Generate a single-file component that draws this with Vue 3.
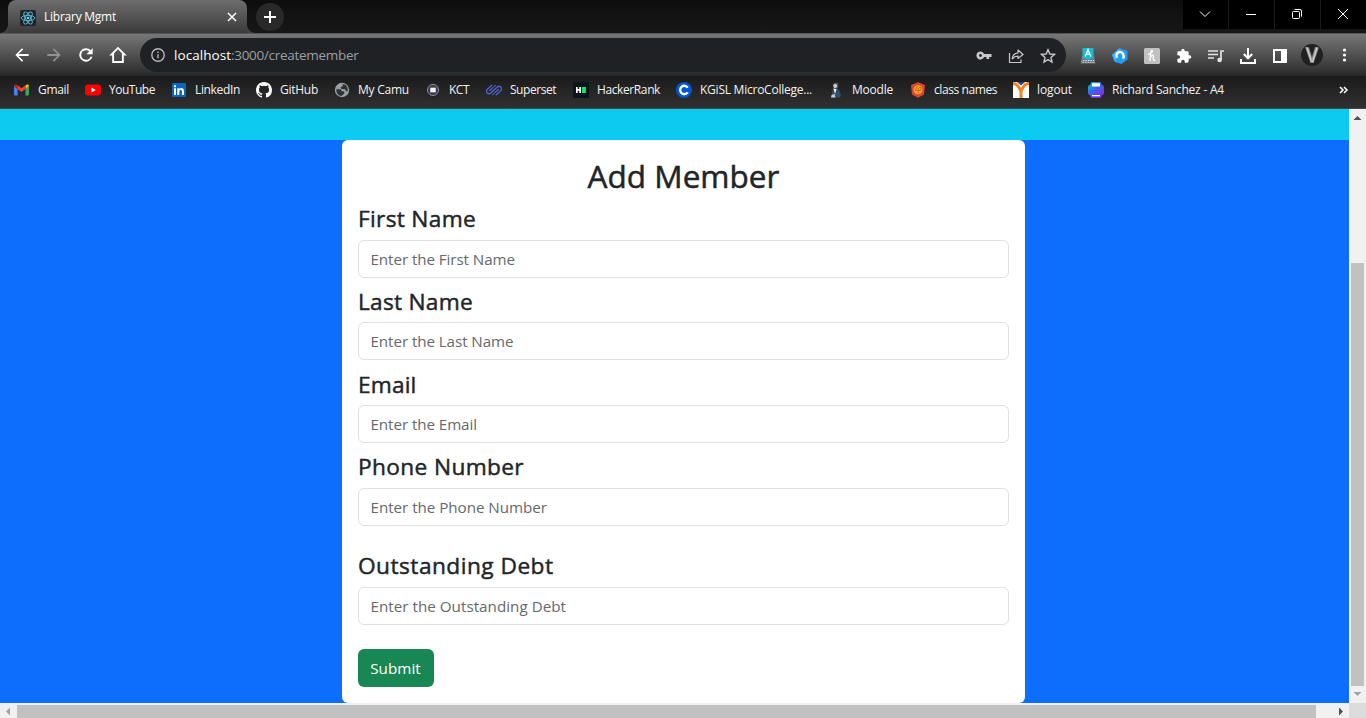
<script setup>
const svg = (box, body) => `<svg viewBox="0 0 ${box} ${box}" width="100%" height="100%" xmlns="http://www.w3.org/2000/svg">${body}</svg>`

const bookmarks = [
  { label: 'Gmail', width: 31, icon: svg(16, '<path d="M1 13.5h2.6V7L0 4.3v8.2a1 1 0 0 0 1 1z" fill="#4285f4"/><path d="M11.4 13.5H14a1 1 0 0 0 1-1V4.3L11.4 7z" fill="#34a853"/><path d="M11.4 3.6V7L15 4.3c0-2-1.500-2.300-2.500-1.500z" fill="#fbbc04"/><path d="M3.600 7V3.200l3.900 3 3.900-3V7L7.500 10z" fill="#ea4335"/><path d="M0 4.300 3.600 7V3.300C1.800 1.800 0 2.600 0 4.300z" fill="#c5221f"/>') },
  { label: 'YouTube', width: 46, icon: svg(16, '<rect x="0" y="2.500" width="16" height="11" rx="3" fill="#f00"/><path d="m6.500 5.500 4.200 2.500-4.200 2.500z" fill="#fff"/>') },
  { label: 'LinkedIn', width: 45, icon: svg(16, '<rect x="1" y="1" width="14" height="14" rx="1" fill="#0a66c2"/><path d="M3 6.200h2V13H3zM3 3.200h2v2H3zM6.300 6.200h1.900v.9C9.800 5.200 13 5.900 13 9v4h-2V9.400c0-2-2.700-2-2.700 0V13h-2z" fill="#fff"/>') },
  { label: 'GitHub', width: 38, icon: svg(16, '<path d="M8 0C3.580 0 0 3.580 0 8c0 3.540 2.290 6.530 5.470 7.590.4.070.55-.17.55-.38v-1.490c-2.010.37-2.530-.49-2.690-.94-.09-.23-.48-.94-.82-1.130-.28-.15-.68-.52-.01-.53.63-.01 1.080.58 1.230.82.72 1.210 1.870.87 2.330.66.07-.52.28-.87.51-1.070-1.780-.2-3.640-.89-3.640-3.950 0-.87.31-1.590.82-2.150-.08-.2-.36-1.020.08-2.120 0 0 .67-.21 2.200.82a7.600 7.600 0 0 1 4 0c1.530-1.040 2.200-.82 2.200-.82.44 1.100.16 1.920.08 2.120.51.56.82 1.270.82 2.150 0 3.070-1.870 3.750-3.650 3.950.29.25.54.73.54 1.480v2.190c0 .21.15.46.55.38A8 8 0 0 0 16 8c0-4.420-3.580-8-8-8z" fill="#fff"/>') },
  { label: 'My Camu', width: 51, icon: svg(16, '<circle cx="8" cy="8" r="7.200" fill="#9aa0a6"/><path d="M2.300 7.200 6.500 7.300l1.300 2 2.500.2v2l-2.500 2.300c-3.200.2-5.600-2.400-5.500-6.600zM8.500 2 9 3.800 6.700 5.300 7.200 7l3.800.3 1.300 1.900h1.400C14.200 5 12 2.200 8.500 2z" fill="#303134"/>') },
  { label: 'KCT', width: 20, icon: svg(16, '<circle cx="8" cy="8" r="7.500" fill="#24242f"/><circle cx="8" cy="8" r="5.500" fill="#383846" stroke="#8e8da6" stroke-width="1"/><rect x="5.300" y="5.700" width="5.400" height="4.600" fill="#fff"/><path d="M6.200 7h3.600M6.200 8.800h3.600" stroke="#c7c7c7" stroke-width=".5"/>') },
  { label: 'Superset', width: 46, icon: svg(16, '<g transform="rotate(-42 8 8)" fill="none" stroke="#4f63d2" stroke-width="1.300" stroke-linecap="round"><path d="M9.500 3H3.500a2.500 2.500 0 0 0 0 5H11M9.500 5.500h-5M6.500 13h6a2.500 2.500 0 0 0 0-5H11M6.500 10.500h5M5 8h6"/><path d="M11 5.500h1M4 10.500h1"/></g>') },
  { label: 'HackerRank', width: 63, icon: svg(16, '<path d="M0 0h16v16H0z" fill="#0e141e"/><path d="M3 5h1.700v2h1.600V5H8v6H6.300V8.800H4.700V11H3z" fill="#fff"/><path d="M9 5h4v6H9z" fill="#00ea64"/>') },
  { label: 'KGiSL MicroCollege...', width: 112, icon: svg(16, '<circle cx="8" cy="8" r="8" fill="#0056d2"/><path d="M11.800 10.400a4.200 4.200 0 1 1 0-4.800" fill="none" stroke="#fff" stroke-width="2.400"/>') },
  { label: 'Moodle', width: 41, icon: svg(16, '<path d="M4.500 2.500 7 .5 10 1l.5 3-1 2.500-3.500-.5z" fill="#4d545c"/><circle cx="7.200" cy="4" r="1.900" fill="#dbd0c2"/><path d="m4.500 7 3-1L11 8l2 5-1 2.500H4z" fill="#2e4f68"/><path d="m5.500 6.500 3 .5-1.500 5z" fill="#f1f4f6"/><path d="m3.500 13 3-1 1 3.500H3z" fill="#c5ced5"/>') },
  { label: 'class names', width: 63, icon: svg(16, '<path d="M8 .3 15 3l-1 9.500-6 3.300-6-3.300L1 3z" fill="#dc4437"/><circle cx="8" cy="7.700" r="4.500" fill="#f4a61e"/><path d="m7.500 4-2.500 4.300h3M8.500 6v5.500M9 5.500h2v3H9" stroke="#c65e19" stroke-width=".9" fill="none"/>') },
  { label: 'logout', width: 35, icon: svg(16, '<path d="M0 0h16v16H0z" fill="#fff"/><path d="M4 0h8L8 3.500z" fill="#24469b"/><path d="M0 1.600c3 0 4.500 1.200 6 3.900L8 9v7M16 1.600c-3 0-4.500 1.200-6 3.900L8 9" fill="none" stroke="#f58220" stroke-width="3"/>') },
  { label: 'Richard Sanchez - A4', width: 112, icon: svg(16, '<defs><linearGradient id="printer" x1="0" y1="0" x2=".8" y2="1"><stop stop-color="#00d0cc"/><stop offset=".5" stop-color="#3b62e8"/><stop offset="1" stop-color="#8b25ed"/></linearGradient></defs><path d="M4 0h8q1.500 0 1.500 2.500Q16 3 16 5v6q0 2-2.500 2.500Q13.500 16 12 16H4q-1.500 0-1.500-2.500Q0 13 0 11V5q0-2 2.500-2.500Q2.500 0 4 0z" fill="url(#printer)"/><path d="M4 1.200h8V4.500H4zM4 13h8V14.300H4z" fill="#fff"/>') },
]

const navigation = [
  { name: 'Back', color: '#fff', path: 'M20 10.800H7.830l5.590-5.390L12 4l-8 8 8 8 1.410-1.410L7.830 13.200H20v-2.400z' },
  { name: 'Forward', color: '#929292', path: 'm12 4-1.410 1.410L16.170 10.800H4v2.400h12.170l-5.580 5.390L12 20l8-8z' },
  { name: 'Reload', color: '#fff', path: 'M17.650 6.350A8 8 0 1 0 19.730 14h-2.380A5.700 5.700 0 1 1 12 6.300c1.660 0 2.940.59 3.920 1.580L12.500 11H20V3.500z' },
  { name: 'Home', color: '#fff', path: 'M12 2 1.500 12.500h3.500V21.500h14v-9h3.500zM12 5.200l4.700 4.700v9.300H7.300V9.900z' },
]

const pillIcons = [
  svg(16, '<path d="M8.100 6.500a4 4 0 1 0 0 3H10.500V11.500h2.700V9.500H15.500v-3zM4.500 9.400a1.400 1.400 0 1 1 0-2.800 1.400 1.400 0 0 1 0 2.800z" fill="#c7c8ca" transform="translate(0 -.5)"/>'),
  svg(16, '<path d="M1.500 5v9.500H13v-3M10 2l5 4.500-5 4v-2.400c-2.600 0-4.200.8-5.800 2.700.4-3.300 2.500-5.400 5.800-5.900z" fill="none" stroke="#c7c8ca" stroke-width="1.200" stroke-linejoin="round"/>'),
  svg(16, '<path d="m8 1.700 1.850 4.300 4.650.4-3.530 3.080 1.060 4.560L8 11.630l-4.030 2.410 1.060-4.560L1.500 6.400l4.650-.4z" fill="none" stroke="#c7c8ca" stroke-width="1.400"/>'),
]

const extensions = [
  svg(16, '<path d="M2 8h12l1.500 7.500h-15z" fill="#747d80"/><path d="M3 12.500h11M2.500 14.300h12" stroke="#d4d4d4" stroke-dasharray="1.500 1"/><path d="M2.500 0h11v9.500L8 12 2.500 9.500z" fill="#16bdd2"/><path d="m5.200 8.500 2.800-7 2.800 7M6.300 6.300h3.400" fill="none" stroke="#e9ffff" stroke-width="1.400"/>'),
  svg(16, '<path d="m7.500 0 8 3V11.500L9.500 16 3 14 0 7z" fill="#229cf4"/><path d="m0 7 7.500-7-2 8L3 14z" fill="#45b3fb"/><path d="M5 9.800C3.200 6 6 4 8 4c3 0 4.700 3.500 3 6.800" fill="none" stroke="#fff" stroke-width="2.400"/>'),
  svg(16, '<rect width="16" height="16" rx="1.500" fill="#c1c1c1"/><path d="M4 6.500c2.500-.5 5.300-3.200 4.200-4C6.800 2 6.300 7 6 13M6.200 10c1.200-3.500 3.500-3.500 3.300-1.500-.6 2.500-.3 4.700 1.700 3.600" fill="none" stroke="#fff" stroke-width="1.300"/>'),
  svg(24, '<path d="M20.500 11H19V7a2 2 0 0 0-2-2h-4V3.500a2.500 2.500 0 0 0-5 0V5H4a2 2 0 0 0-2 2v3.800h1.500a2.700 2.700 0 0 1 0 5.400H2V20a2 2 0 0 0 2 2h3.800v-1.500a2.700 2.700 0 0 1 5.400 0V22H17a2 2 0 0 0 2-2v-4h1.500a2.500 2.500 0 0 0 0-5z" fill="#fff"/>'),
  svg(16, '<path d="M0 3h10M0 6.500h10M0 10h6" stroke="#e3e3e3" stroke-width="1.600"/><path d="M13 12V3H16" fill="none" stroke="#e3e3e3" stroke-width="1.700"/><circle cx="11.600" cy="12" r="2.300" fill="#e3e3e3"/>'),
  svg(16, '<path d="M8 0v10M3.800 6 8 10.300 12.200 6M1 11v4h14v-4" fill="none" stroke="#fff" stroke-width="2"/>'),
  svg(16, '<path d="M1 1h14v14H1zM3 3v10h6V3z" fill="#fff" fill-rule="evenodd"/>'),
]

const react = svg(16, '<rect width="16" height="16" rx="2" fill="#20232a"/><g fill="none" stroke="#55bdd8" stroke-width=".9"><ellipse cx="8" cy="8" rx="6.800" ry="2.600"/><ellipse cx="8" cy="8" rx="6.800" ry="2.600" transform="rotate(60 8 8)"/><ellipse cx="8" cy="8" rx="6.800" ry="2.600" transform="rotate(120 8 8)"/></g><circle cx="8" cy="8" r="1.300" fill="#61dafb"/>')

const fields = [
  { label: 'First Name', labelWidth: 118, placeholder: 'Enter the First Name', width: 144.5 },
  { label: 'Last Name', labelWidth: 115, placeholder: 'Enter the Last Name', width: 143 },
  { label: 'Email', labelWidth: 58.5, placeholder: 'Enter the Email', width: 106.5 },
  { label: 'Phone Number', labelWidth: 166, placeholder: 'Enter the Phone Number', width: 176.5 },
  { label: 'Outstanding Debt', labelWidth: 195.5, placeholder: 'Enter the Outstanding Debt', width: 195.5, spaced: true },
]

// Spreads the letters of a text evenly so that it takes the given width.
const measure = document.createElement('canvas').getContext('2d')
const vFit = {
  mounted(el, { value }) {
    const style = getComputedStyle(el)
    const text = el.placeholder || el.textContent.trim()
    measure.font = `${style.fontWeight} ${style.fontSize} ${style.fontFamily}`
    el.style.letterSpacing = `${(value - measure.measureText(text).width) / text.length}px`
  },
}
</script>

<template>
  <div class="browser">
    <header class="tabs">
      <div class="tab">
        <i class="icon" v-html="react"></i>
        <span class="tab-title" v-fit="72">Library Mgmt</span>
        <svg class="tab-close" viewBox="0 0 10 10"><path d="m1 1 8 8M9 1 1 9" /></svg>
      </div>
      <div class="new-tab"><svg viewBox="0 0 12 12"><path d="M6 0v12M0 6h12" /></svg></div>
      <div class="window-buttons">
        <span><svg viewBox="0 0 12 12"><path d="m1 3.500 5 5 5-5" /></svg></span>
        <span><svg viewBox="0 0 12 12"><path d="M1 6.500h10" /></svg></span>
        <span><svg viewBox="0 0 12 12"><rect x="1.500" y="3.500" width="7" height="7" rx="1" /><path d="M3.500 1.500H9q1.500 0 1.500 1.500v5.500" /></svg></span>
        <span><svg viewBox="0 0 12 12"><path d="m1 1 10 10M11 1 1 11" /></svg></span>
      </div>
    </header>

    <div class="toolbar">
      <div v-for="n in navigation" :key="n.name" class="cell">
        <svg width="20" height="20" viewBox="0 0 24 24" :fill="n.color"><path :d="n.path" /></svg>
      </div>
      <div class="address">
        <svg class="info" viewBox="0 0 14 14"><circle cx="7" cy="7" r="6.200" /><path d="M7 6.200v4M7 3.500v1.500" /></svg>
        <span class="url"><span class="host" v-fit="57">localhost</span><span v-fit="127.500">:3000/createmember</span></span>
        <div v-for="(p, i) in pillIcons" :key="i" class="cell"><i class="icon" v-html="p"></i></div>
      </div>
      <div v-for="(e, i) in extensions" :key="i" class="cell"><i class="icon" v-html="e"></i></div>
      <div class="cell">
        <svg width="22" height="22" viewBox="0 0 22 22"><circle cx="11" cy="11" r="11" fill="#202020" /><path d="m4 3 4 .5L11 13l3-10 4 .5L12.500 19h-3z" fill="#8d8d8d" /><path d="m6 3.500 4.500 14M16 3.500 11.500 18" stroke="#d0d0d0" stroke-width="1.300" /></svg>
      </div>
      <div class="cell">
        <svg width="16" height="16" viewBox="0 0 16 16" fill="#fff"><circle cx="8.500" cy="3" r="1.600" /><circle cx="8.500" cy="8" r="1.600" /><circle cx="8.500" cy="13" r="1.600" /></svg>
      </div>
    </div>

    <nav class="bookmarks">
      <div v-for="b in bookmarks" :key="b.label" class="bookmark">
        <i class="icon" v-html="b.icon"></i><span v-fit="b.width">{{ b.label }}</span>
      </div>
      <svg class="more" viewBox="0 0 9 8"><path d="m1 1 3 3-3 3M5 1l3 3-3 3" /></svg>
    </nav>

    <div class="viewport">
      <main class="page">
        <div class="strip"></div>
        <form class="card" @submit.prevent>
          <h2><span v-fit="192">Add Member</span></h2>
          <div v-for="f in fields" :key="f.label" class="field" :class="{ spaced: f.spaced }">
            <h4><span v-fit="f.labelWidth">{{ f.label }}</span></h4>
            <input v-fit="f.width" :placeholder="f.placeholder" :aria-label="f.label" />
          </div>
          <button type="submit"><span v-fit="50.500">Submit</span></button>
        </form>
      </main>
      <div class="scroll-y">
        <svg viewBox="0 0 17 17"><path d="M4.500 11h8L8.500 7z" fill="#505050" /></svg>
        <div class="thumb"></div>
        <svg viewBox="0 0 17 17"><path d="M4.500 6h8L8.500 10z" fill="#a3a3a3" /></svg>
      </div>
      <div class="scroll-x">
        <svg viewBox="0 0 17 15"><path d="M10 4.500v8l-4-4z" fill="#a3a3a3" /></svg>
        <div class="thumb"></div>
        <svg viewBox="0 0 17 15"><path d="M7 4.500v8l4-4z" fill="#505050" /></svg>
      </div>
      <div class="corner"></div>
    </div>
  </div>
</template>

<style>
body { margin: 0; overflow: hidden; }
</style>

<style scoped>
.browser { width: 1366px; height: 718px; display: flex; flex-direction: column; overflow: hidden; font-family: "Open Sans", "Noto Sans", sans-serif; background: #111; }
* { box-sizing: border-box; }
svg { display: block; }
.icon { display: block; width: 16px; height: 16px; flex: none; }

.tabs { height: 33px; flex: none; display: flex; background: linear-gradient(#0d0d0d, #171717); }
.tab { position: relative; width: 239px; height: 33px; margin-left: 8px; padding: 0 10px 0 12px; display: flex; align-items: center; border-radius: 8px 8px 0 0; background: linear-gradient(#6d6d6d, #3b3b3b); color: #fff; }
.tab::before, .tab::after { content: ""; position: absolute; bottom: 0; width: 8px; height: 8px; }
.tab::before { left: -8px; background: radial-gradient(circle at 0 0, transparent 7.500px, #414141 8px); }
.tab::after { right: -8px; background: radial-gradient(circle at 100% 0, transparent 7.500px, #414141 8px); }
.tab-title { margin-left: 8px; font-size: 12px; white-space: nowrap; }
.tab-close { width: 10px; height: 10px; margin-left: auto; fill: none; stroke: #fff; stroke-width: 1.500; }
.new-tab { width: 28px; height: 28px; margin: 3px 0 0 9px; border-radius: 50%; background: #292929; display: flex; align-items: center; justify-content: center; }
.new-tab svg { width: 12px; height: 12px; stroke: #fff; stroke-width: 2; }
.window-buttons { display: flex; gap: 1px; height: 29px; margin-left: auto; background: #1b1b1b; }
.window-buttons span { width: 45px; padding: 0 2px 1px 0; background: #000; display: flex; align-items: center; justify-content: center; }
.window-buttons svg { width: 12px; height: 12px; fill: none; stroke: #fff; }

.toolbar { height: 43px; flex: none; display: flex; align-items: center; padding-left: 6px; border-top: 1px solid #555; background: linear-gradient(#777, #292929); }
.cell { width: 32px; height: 32px; flex: none; display: flex; align-items: center; justify-content: center; }
.address { width: 926px; height: 34px; margin: 0 6px; padding: 0 2px 0 11px; border-radius: 17px; background: #202124; display: flex; align-items: center; }
.info { width: 14px; height: 14px; fill: none; stroke: #b5b8bc; stroke-width: 1.400; }
.url { margin: 0 auto 0 9px; font-size: 13.500px; color: #9aa0a6; white-space: nowrap; }
.host { color: #fff; }

.bookmarks { position: relative; height: 33px; flex: none; padding: 0 0 4px 14px; display: grid; grid-template-columns: 71px 86px 85px 78px 91px 61px 87px 103px 152px 82px 103px 75px 1fr auto; align-items: center; border-bottom: 1px solid #474747; background: linear-gradient(#1b1b1b, #303030); }
.bookmark { display: flex; align-items: center; gap: 8px; font-size: 12px; line-height: 16px; color: #f2f2f2; white-space: nowrap; }
.bookmark span { padding-bottom: 1px; }
.more { width: 9px; height: 8px; margin-right: 18px; fill: none; stroke: #fff; stroke-width: 1.500; }

.viewport { flex: 1; min-height: 0; display: grid; grid-template: 594px 15px / 1349px 17px; }
.page { background: #0d6efd; overflow: hidden; }
.strip { height: 31px; background: #0dcaf0; }
.card { width: 683px; height: 563px; margin-left: 342px; padding: 16.400px 16px 16px; border-radius: 6px; background: #fff; color: #212529; }
h2, h4 { margin: 0 0 8px; display: flex; align-items: center; font-weight: 500; line-height: 1.200; white-space: nowrap; }
h2 { height: 38.400px; justify-content: center; padding-top: 1px; font-size: 31.500px; -webkit-text-stroke: .5px #212529; }
h4 { height: 28.800px; padding-top: 3px; font-size: 22.700px; -webkit-text-stroke: .45px #212529; }
.field { margin-bottom: 8px; }
.field.spaced { margin-top: 24px; }
input { display: block; width: 651px; height: 38px; padding: 6px 11.500px; border: 1px solid #dee2e6; border-radius: 6px; background: #fff; font: 15.200px "Open Sans", "Noto Sans", sans-serif; }
input::placeholder { color: #66696c; opacity: 1; }
button { display: block; width: 76px; height: 38px; margin-top: 24px; padding: 1px 1px 0 0; border: 0; border-radius: 6px; background: #198754; color: #fff; font: 15.200px "Open Sans", "Noto Sans", sans-serif; }

.scroll-y { display: flex; flex-direction: column; background: #f1f1f1; }
.scroll-y svg { width: 17px; height: 17px; }
.scroll-y .thumb { width: 13px; height: 423px; margin: 137px 0 0 2px; background: #c1c1c1; }
.scroll-x { display: flex; background: #f1f1f1; }
.scroll-x svg { width: 17px; height: 15px; }
.scroll-x .thumb { width: 1299px; height: 13px; margin: 2px 16px 0 0; background: #c1c1c1; }
.corner { background: #dcdcdc; }
</style>
